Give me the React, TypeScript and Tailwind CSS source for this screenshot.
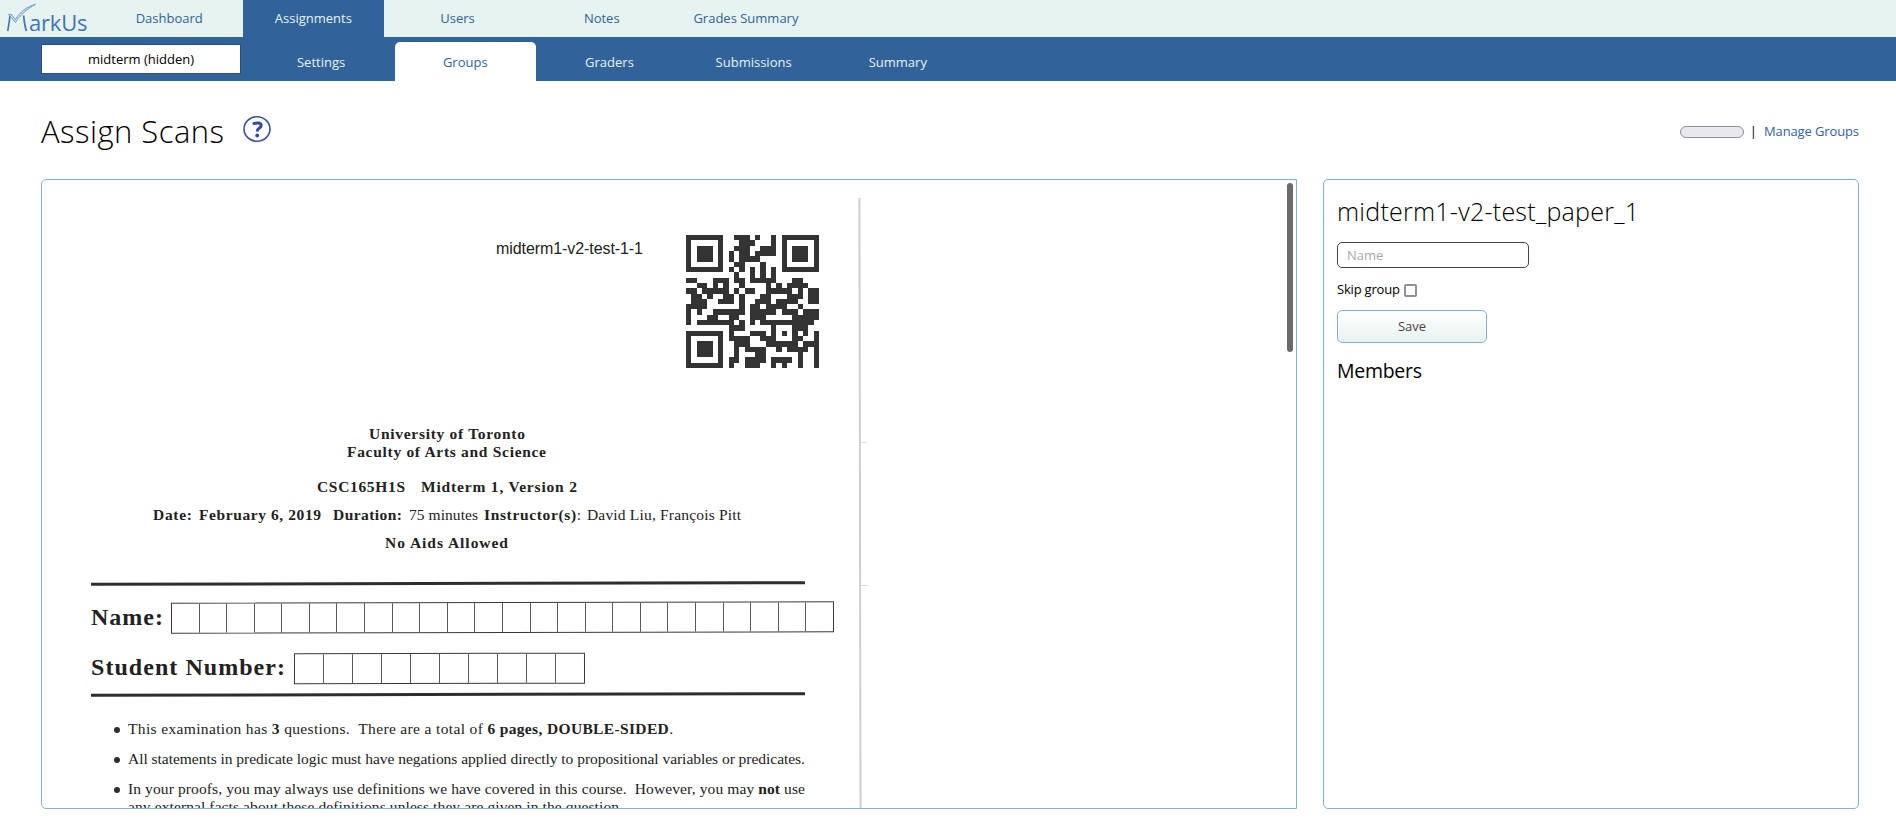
import { useLayoutEffect, useRef, useState, type ReactNode } from 'react';

const QR_ROWS = [
  '1111111001110100101111111',
  '1000001000111000101000001',
  '1011101001110011101011101',
  '1011101010110111101011101',
  '1011101010111100001011101',
  '1000001001100010001000001',
  '1111111010101010101111111',
  '0000000001001010100000000',
  '1100011101101111100011000',
  '0011010100100001010111100',
  '1101111101011001111101011',
  '0110100110100011000111011',
  '0111001110100111011110011',
  '1111000000101101111001000',
  '1010011111101111101110111',
  '1000110011001110000011111',
  '1011111110101011111111110',
  '0000000011100000100011100',
  '1111111010001110101010101',
  '1000001011110011100011001',
  '1011101001110001111110111',
  '1011101001011110010111101',
  '1011101001000110000001001',
  '1000001011011110111101001',
  '1111111010011100101001001',
];

/** Sets text to an exact line width by adjusting the letter spacing. */
function Fit({ width, className = '', children }: { width: number; className?: string; children: ReactNode }) {
  const ref = useRef<HTMLSpanElement>(null);
  const [spacing, setSpacing] = useState(0);
  useLayoutEffect(() => {
    const el = ref.current;
    if (!el) return;
    const count = Math.max(1, (el.textContent ?? '').length - 1);
    setSpacing((width - el.getBoundingClientRect().width) / count);
  }, [width]);
  return (
    <span className={`block shrink-0 whitespace-pre ${className}`} style={{ width }}>
      <span ref={ref} className="inline-block" style={{ letterSpacing: spacing }}>
        {children}
      </span>
    </span>
  );
}

function Logo() {
  return (
    <svg className="h-[37px] w-[98px] shrink-0" viewBox="0 0 98 37" fill="none">
      <path d="M7.700 31C8.600 26 9.600 20 10 15" stroke="#3f72b5" strokeWidth="1.6" />
      <path d="M23.600 15.500C24.200 21 24.800 27 26.400 31" stroke="#4677b8" strokeWidth="1.8" />
      <path
        d="M8.500 14.500L11 14L15.300 19.500C20 12 27 6.500 35.500 4.300C27 9 20 15 15.500 22.500Z"
        fill="#c4ddec"
        stroke="#6598c8"
        strokeWidth="0.9"
      />
      <text x="29" y="31" textLength="58.500" fontFamily="Open Sans" fontSize="22" fill="#4173b8">
        arkUs
      </text>
    </svg>
  );
}

function HelpIcon() {
  return (
    <svg className="h-[28px] w-[30px]" viewBox="0 0 30 28" fill="none">
      <ellipse cx="15" cy="14" rx="13" ry="12.300" fill="#fff" stroke="#3c4fa8" strokeWidth="1.6" />
      <path d="M11 9.300C13 7.600 19.200 7 19.200 10.500C19.200 13.200 15.200 13 15.200 16.500" stroke="#3549a2" strokeWidth="3" />
      <circle cx="15.200" cy="20.500" r="1.900" fill="#3549a2" />
    </svg>
  );
}

function QrCode() {
  const d = QR_ROWS.flatMap((row, y) =>
    [...row].map((cell, x) => (cell === '1' ? `M${x} ${y}h1v1h-1z` : '')),
  ).join('');
  return (
    <svg className="ml-[43px] size-[133px] shrink-0" viewBox="0 0 25 25" shapeRendering="crispEdges">
      <path d={d} fill="#333" />
    </svg>
  );
}

function Cells({ count, className }: { count: number; className: string }) {
  return (
    <div className={`flex h-[31px] -rotate-[0.12deg] border border-[#3a3a3a] ${className}`}>
      {Array.from({ length: count }, (_, i) => (
        <div key={i} className="flex-1 border-r border-[#5a5a5a] last:border-r-0" />
      ))}
    </div>
  );
}

function Bullet({ width, children }: { width: number; children: ReactNode }) {
  return (
    <li className="flex h-[18px] items-center">
      <span className="ml-[72px] mr-[8px] mt-[2px] size-[6px] rounded-full bg-[#2e2e2e]" />
      <Fit width={width}>{children}</Fit>
    </li>
  );
}

function ScannedPage() {
  return (
    <div className="flex font-['Liberation_Serif',serif] text-[15.500px] leading-[18px] text-[#222]">
      <div className="w-[817px] shrink-0 pt-[55px]">
        <div className="flex h-[133px]">
          <Fit width={147} className="ml-[454px] pt-[2px] font-['Liberation_Sans',sans-serif] text-[16px] leading-[24px]">
            midterm1-v2-test-1-1
          </Fit>
          <QrCode />
        </div>
        <Fit width={156} className="ml-[327px] mt-[57px] font-bold">University of Toronto</Fit>
        <Fit width={199} className="ml-[305px] font-bold">Faculty of Arts and Science</Fit>
        <div className="mt-[17px] flex font-bold">
          <Fit width={88} className="ml-[275px]">CSC165H1S</Fit>
          <Fit width={156} className="ml-[16px]">Midterm 1, Version 2</Fit>
        </div>
        <div className="mt-[10px] flex">
          <Fit width={39} className="ml-[111px] font-bold">Date:</Fit>
          <Fit width={122} className="ml-[7px] font-bold">February 6, 2019</Fit>
          <Fit width={69} className="ml-[12px] font-bold">Duration:</Fit>
          <Fit width={69} className="ml-[7px]">75 minutes</Fit>
          <Fit width={97} className="ml-[6px]"><b>Instructor(s)</b>:</Fit>
          <Fit width={154} className="ml-[6px]">David Liu, François Pitt</Fit>
        </div>
        <Fit width={123} className="ml-[343px] mt-[10px] font-bold">No Aids Allowed</Fit>
        <div className="ml-[49px] mt-[30px] h-[3px] w-[714px] -rotate-[0.12deg] bg-[#2e2e2e]" />
        <div className="mt-[17px] flex h-[31px]">
          <Fit width={72} className="ml-[49px] mt-[1px] text-[24px] font-bold leading-[28px]">Name:</Fit>
          <Cells count={24} className="ml-[8px] w-[663px]" />
        </div>
        <div className="mt-[20px] flex h-[31px]">
          <Fit width={194} className="ml-[49px] text-[24px] font-bold leading-[28px]">Student Number:</Fit>
          <Cells count={10} className="ml-[9px] w-[291px]" />
        </div>
        <div className="ml-[49px] mt-[9px] h-[3px] w-[714px] -rotate-[0.12deg] bg-[#2e2e2e]" />
        <ul className="mt-[24px] flex flex-col gap-[12px]">
          <Bullet width={545}>
            This examination has <b>3</b> questions.  There are a total of <b>6 pages, DOUBLE-SIDED</b>.
          </Bullet>
          <Bullet width={677}>
            All statements in predicate logic must have negations applied directly to propositional variables or predicates.
          </Bullet>
          <Bullet width={677}>
            In your proofs, you may always use definitions we have covered in this course.  However, you may <b>not</b> use
          </Bullet>
        </ul>
        <Fit width={495} className="ml-[86px]">any external facts about these definitions unless they are given in the question.</Fit>
      </div>
      <div className="mt-[18px] flex h-[640px] w-[8px] -rotate-[0.1deg] flex-col border-l-2 border-[#cfcfcf]">
        <div className="mt-[244px] h-px bg-[#e2e2e2]" />
        <div className="mt-[142px] h-px bg-[#d8d8d8]" />
      </div>
    </div>
  );
}

function NavItem({ label, className = '' }: { label: string; className?: string }) {
  return <a className={`flex w-[141px] shrink-0 items-center justify-center ${className}`}>{label}</a>;
}

export default function App() {
  return (
    <div className="flex h-[827px] w-[1896px] flex-col overflow-hidden bg-white font-['Open_Sans',sans-serif] text-[13px] text-black">
      <nav className="flex h-[37px] shrink-0 gap-[3.200px] bg-[#e6f3f0] text-[#31639a]">
        <Logo />
        <NavItem label="Dashboard" className="-ml-[2.500px]" />
        <NavItem label="Assignments" className="bg-[#31639a] text-[#e6f3f0]" />
        <NavItem label="Users" />
        <NavItem label="Notes" />
        <NavItem label="Grades Summary" />
      </nav>
      <nav className="flex h-[44px] shrink-0 gap-[3.200px] bg-[#31639a] pl-[41px] pt-[5px] text-[#e6f3f0]">
        <div className="mr-[6.400px] mt-[2px] flex h-[30px] w-[200px] items-center justify-center border border-[#245089] bg-white pt-px text-black">
          midterm (hidden)
        </div>
        <NavItem label="Settings" className="pt-[3px]" />
        <NavItem label="Groups" className="rounded-t-[5px] bg-white pt-[3px] text-[#31639a]" />
        <NavItem label="Graders" className="pt-[3px]" />
        <NavItem label="Submissions" className="pt-[3px]" />
        <NavItem label="Summary" className="pt-[3px]" />
      </nav>

      <header className="mx-[41px] flex h-[98px] shrink-0 items-start pt-[28px]">
        <h1 className="mt-px text-[31px] font-light leading-[42px]">
          <Fit width={183}>Assign Scans</Fit>
        </h1>
        <div className="ml-[18px] mt-[6px]">
          <HelpIcon />
        </div>
        <div className="ml-auto mr-[-4px] mt-[13px] flex h-[20px] items-center">
          <div className="h-[12px] w-[64px] rounded-full border border-[#8f8f9d] bg-[#e9e9ed]" />
          <span className="ml-[6px]">|</span>
          <Fit width={95} className="ml-[7px] text-[#31639a]">Manage Groups</Fit>
        </div>
      </header>

      <main className="ml-[41px] flex h-[630px] gap-[26px]">
        <section className="flex w-[1256px] shrink-0 overflow-hidden rounded-l-[5px] border border-[#84b0dc]">
          <div className="min-w-0 flex-1">
            <ScannedPage />
          </div>
          <div className="mr-[3px] mt-[3px] h-[169px] w-[6px] shrink-0 rounded-full bg-[#6b6b6b]" />
        </section>
        <aside className="w-[536px] shrink-0 rounded-[5px] border border-[#84b0dc] pl-[13px]">
          <h2 className="mt-[14px] text-[25px] font-light leading-[34px]">
            <Fit width={302}>midterm1-v2-test_paper_1</Fit>
          </h2>
          <input
            placeholder="Name"
            className="mt-[14px] block h-[26px] w-[192px] rounded-[5px] border border-[#444] px-[9px] placeholder:text-[#aaa]"
          />
          <label className="mt-[12px] flex h-[19px] items-center">
            <Fit width={63}>Skip group</Fit>
            <span className="ml-[4px] mt-[2px] size-[13px] rounded-[2px] border-2 border-[#8f8f9d] bg-white" />
          </label>
          <button className="mt-[11px] block h-[33px] w-[150px] rounded-[5px] border border-[#84b0dc] bg-linear-to-b from-white to-[#e6f3f0] text-[#444]">
            Save
          </button>
          <h3 className="mt-[14px] text-[19.500px] leading-[28px]">
            <Fit width={85}>Members</Fit>
          </h3>
        </aside>
      </main>
    </div>
  );
}
